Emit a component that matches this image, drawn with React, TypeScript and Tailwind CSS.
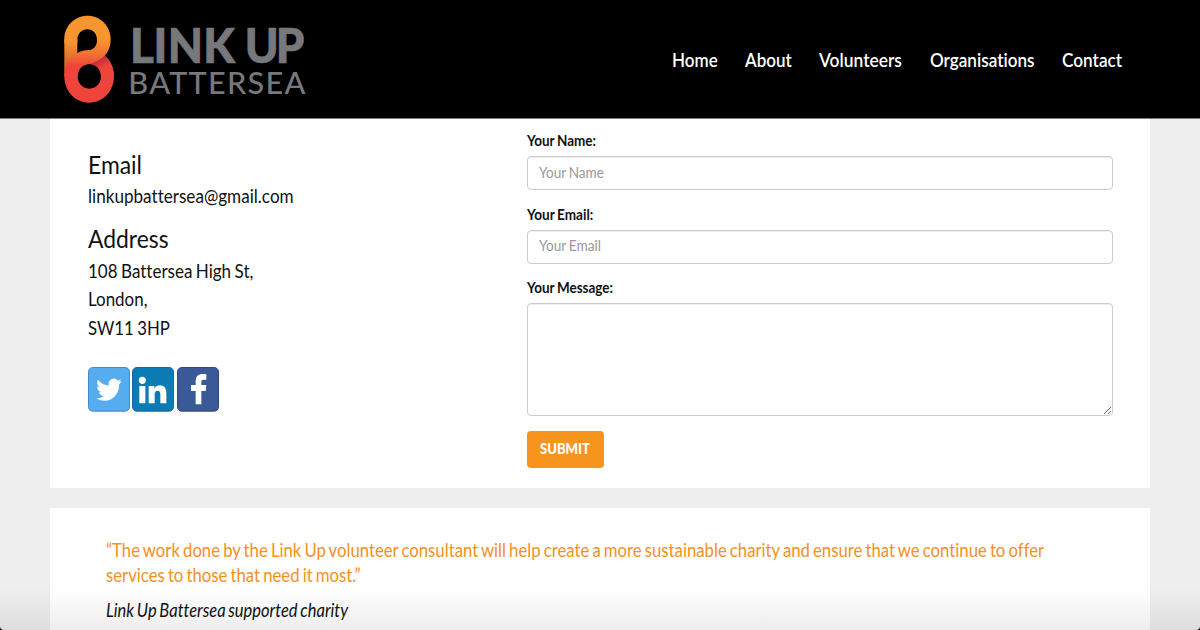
import type { ReactNode } from "react";

function Narrow({ children, className = "scale-x-[0.93]" }: { children: ReactNode; className?: string }) {
  return <span className={`block w-max origin-left whitespace-nowrap ${className}`}>{children}</span>;
}

function Logo() {
  return (
    <svg viewBox="0 0 810 354" className="ml-[50px] h-[118px] w-[270px] shrink-0" role="img" aria-label="Link Up Battersea">
      <defs>
        <linearGradient id="band" x1="0" y1="47" x2="0" y2="230" gradientUnits="userSpaceOnUse">
          <stop offset="0.4" stopColor="#f7962f" />
          <stop offset="0.64" stopColor="#f37032" />
          <stop offset="0.82" stopColor="#ef443b" />
        </linearGradient>
        <linearGradient id="fold" x1="148" y1="174" x2="165" y2="202" gradientUnits="userSpaceOnUse">
          <stop offset="0" stopColor="#bd2a38" />
          <stop offset="1" stopColor="#ef443b" />
        </linearGradient>
        <linearGradient id="stem" x1="0" y1="125" x2="0" y2="190" gradientUnits="userSpaceOnUse">
          <stop offset="0" stopColor="#f7962f" />
          <stop offset="1" stopColor="#d8662e" />
        </linearGradient>
      </defs>
      <path
        fillRule="evenodd"
        fill="#ef443b"
        d="M117 150C159 150 192 185 192 229C192 274 159 308 117 308C76 308 43 274 43 229C43 185 76 150 117 150ZM118 192C98 192 83 208 83 229C83 250 98 266 118 266C138 266 153 250 153 229C153 208 138 192 118 192Z"
      />
      <path fill="url(#fold)" d="M118 192V160L157 162C178 174 192 200 192 229H153C153 208 138 192 118 192Z" />
      <path fill="url(#stem)" d="M43 215V117H82V170Z" />
      <path
        fill="url(#band)"
        d="M43 117C43 78 74 47 113 47C151 47 182 78 182 117C182 146 171 165 152 176C137 186 127 190 118 192C98 192 83 208 83 229H43C43 195 58 170 82 160C94 152 104 153 115 151C133 149 141 137 141 120C141 101 129 88 112 88C95 88 82 101 82 119L82 130H43Z"
      />
      <g fill="#77787b" fontFamily="Lato, sans-serif">
        <text
          transform="translate(13.7 0) scale(0.972 1)"
          x="233 305 349 459 587 683"
          y="188"
          fontSize="141"
          fontWeight="900"
          stroke="#77787b"
          strokeWidth="2"
        >
          LINKUP
        </text>
        <text x="235" y="283" fontSize="92" fontWeight="500" textLength="531" lengthAdjust="spacing">BATTERSEA</text>
      </g>
    </svg>
  );
}

function Header() {
  return (
    <header className="flex h-[119px] items-center border-b border-[#777] bg-black">
      <Logo />
      <nav className="ml-[352px] mt-[2px] flex text-[18.5px] font-semibold leading-6 text-white">
        <a className="w-[73px]"><Narrow className="scale-x-[0.92]">Home</Narrow></a>
        <a className="w-[74px]"><Narrow className="scale-x-[0.92]">About</Narrow></a>
        <a className="w-[111px]"><Narrow className="scale-x-[0.94]">Volunteers</Narrow></a>
        <a className="w-[132px]"><Narrow className="scale-x-[0.925]">Organisations</Narrow></a>
        <a className="w-[60px]"><Narrow>Contact</Narrow></a>
      </nav>
    </header>
  );
}

function Social() {
  const tile = "h-[45px] w-[42px]";
  return (
    <div className="mt-[24.5px] flex gap-[2.5px]">
      <svg viewBox="0 0 126 135" className={tile}>
        <rect x="1.5" y="1.5" width="123" height="131" rx="13" fill="#55acee" stroke="#3f8ccb" strokeWidth="3" />
        <path
          transform="translate(24.5 27.5) scale(3.2 3.4)"
          fill="#fff"
          d="M23.954 4.569a10 10 0 0 1-2.825.775 4.958 4.958 0 0 0 2.163-2.723 9.99 9.99 0 0 1-3.127 1.184 4.92 4.92 0 0 0-8.384 4.482C7.691 8.094 4.066 6.13 1.64 3.161a4.822 4.822 0 0 0-.666 2.475c0 1.71.87 3.213 2.188 4.096a4.904 4.904 0 0 1-2.228-.616v.061a4.923 4.923 0 0 0 3.946 4.827 4.996 4.996 0 0 1-2.212.085 4.937 4.937 0 0 0 4.604 3.417 9.868 9.868 0 0 1-6.102 2.105c-.39 0-.779-.023-1.17-.067a13.995 13.995 0 0 0 7.557 2.209c9.054 0 13.999-7.496 13.999-13.986 0-.209 0-.42-.015-.63a9.936 9.936 0 0 0 2.46-2.548z"
        />
      </svg>
      <svg viewBox="0 0 126 135" className={tile}>
        <rect x="1.5" y="1.5" width="123" height="131" rx="13" fill="#0a7bb5" stroke="#1a689a" strokeWidth="3" />
        <g fill="#fff">
          <ellipse cx="31" cy="40" rx="10.5" ry="11" />
          <path d="M22 57H40V109H22ZM50 57H67V65C71 58 77 55 84 55C99 55 103 66 103 80V109H85V83C85 76 84 71 77 71C70 71 68 76 68 83V109H50Z" />
        </g>
      </svg>
      <svg viewBox="0 0 126 135" className={tile}>
        <rect x="1.5" y="1.5" width="123" height="131" rx="13" fill="#3b5998" stroke="#2c4684" strokeWidth="3" />
        <path fill="#fff" d="M56 112V72H42V54H56V43C56 28 64 21 77 21C82 21 86 21.5 88 22V38H80C74 38 73 41 73 46V54H88L86 72H73V112Z" />
      </svg>
    </div>
  );
}

function Details() {
  return (
    <section className="w-[439px] text-[18.5px] leading-[28.7px] [word-spacing:-1px]">
      <h3 className="mt-[30px] text-[25px] leading-[30px]"><Narrow className="scale-x-[0.915]">Email</Narrow></h3>
      <p className="mt-[3px]"><Narrow className="scale-x-[0.925]">linkupbattersea@gmail.com</Narrow></p>
      <h3 className="mt-[12px] text-[25px] leading-[30px]"><Narrow className="scale-x-[0.915]">Address</Narrow></h3>
      <p className="mt-[4px]">
        <Narrow className="scale-x-[0.92]">108 Battersea High St,</Narrow>
        <Narrow className="scale-x-[0.915]">London,</Narrow>
        <Narrow className="scale-x-[0.905]">SW11 3HP</Narrow>
      </p>
      <Social />
    </section>
  );
}

function Form() {
  const label = "text-[14.5px] font-bold leading-5 text-[#111] [word-spacing:-0.7px]";
  const field =
    "mt-[5px] flex h-[34px] items-center rounded-[4px] border border-[#ccc] pb-px pl-[11px] text-[14.5px] text-[#999] shadow-[inset_0_1px_1px_rgba(0,0,0,0.075)] [word-spacing:-0.7px]";
  return (
    <section className="w-[586px] pt-[12.4px]">
      <div className={label}><Narrow className="scale-x-[0.93]">Your Name:</Narrow></div>
      <div className={field}><Narrow className="scale-x-[0.935]">Your Name</Narrow></div>
      <div className={`mt-[14.2px] ${label}`}><Narrow className="scale-x-[0.935]">Your Email:</Narrow></div>
      <div className={field}><Narrow className="scale-x-[0.94]">Your Email</Narrow></div>
      <div className={`mt-[14.2px] ${label}`}><Narrow className="scale-x-[0.93]">Your Message:</Narrow></div>
      <textarea className="mt-[5px] block h-[113px] w-full resize rounded-[4px] border border-[#ccc] shadow-[inset_0_1px_1px_rgba(0,0,0,0.075)]" />
      <button className="mt-[15px] flex h-[37px] w-[77px] items-center rounded-[4px] bg-[#f7941d] pl-[13px] text-[14.5px] font-black text-white">
        <Narrow className="scale-x-[0.9]">SUBMIT</Narrow>
      </button>
    </section>
  );
}

export default function App() {
  return (
    <div className="h-[630px] bg-black">
      <div className="relative h-[630px] overflow-hidden rounded-b-[4px] bg-[#eee] font-['Lato',sans-serif] text-[#111] [font-variant-ligatures:none]">
        <Header />
        <main className="mx-auto w-[1100px]">
          <div className="flex h-[369px] bg-white pl-[37.5px]">
            <Details />
            <Form />
          </div>
          <blockquote className="mt-5 h-[122px] bg-white pl-[56px] pt-[30px] text-[18.5px] leading-[25px] [word-spacing:-1.3px]">
            <div className="text-[#f7901e]">
              <Narrow className="scale-x-[0.9045]">“The work done by the Link Up volunteer consultant will help create a more sustainable charity and ensure that we continue to offer</Narrow>
              <Narrow className="scale-x-[0.905]">services to those that need it most.”</Narrow>
            </div>
            <Narrow className="mt-[10px] scale-x-[0.892] italic">Link Up Battersea supported charity</Narrow>
          </blockquote>
        </main>
        <div className="pointer-events-none absolute inset-x-0 bottom-0 h-[42px] bg-linear-to-b from-transparent to-black/7" />
      </div>
    </div>
  );
}
